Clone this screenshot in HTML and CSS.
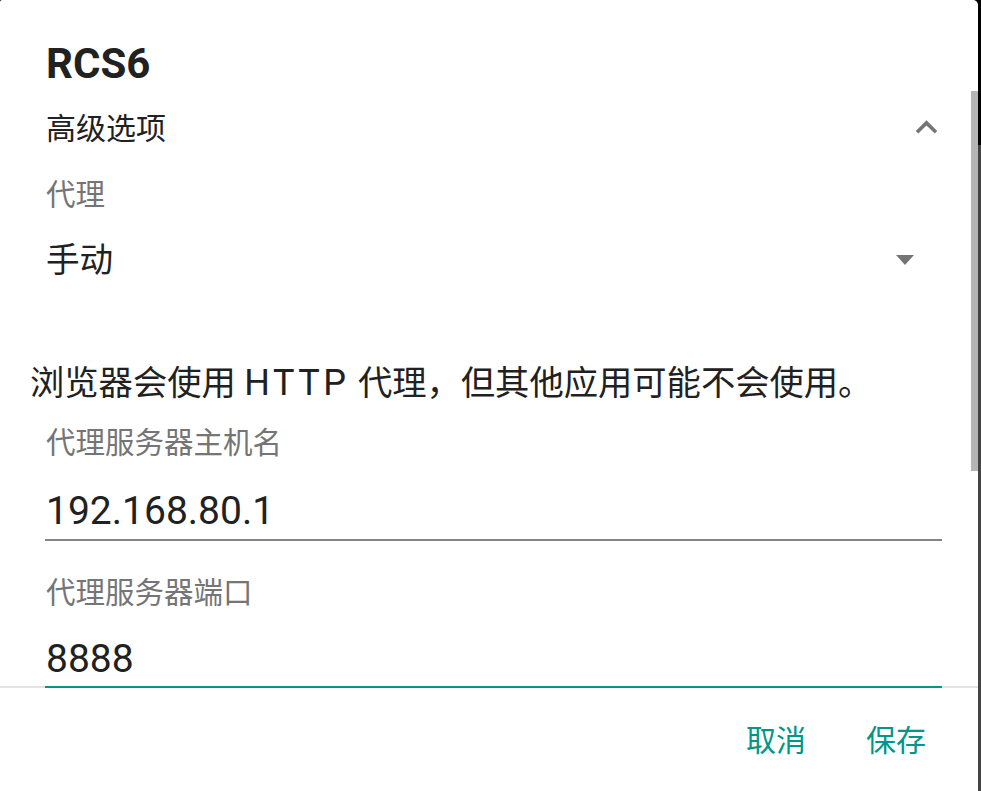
FILE: index.html
```html
<!DOCTYPE html>
<html lang="zh-CN">
<head>
<meta charset="utf-8">
<link rel="stylesheet" href="styles.css">
</head>
<body>
<div class="dialog">
  <div class="title">RCS6</div>
  <div class="scroll">
    <div class="row-adv">
      <span class="adv-text">高级选项</span>
      <svg class="chev" viewBox="0 0 24 24" width="43" height="43"><path d="M12 8l-6 6 1.41 1.41L12 10.83l4.59 4.58L18 14z" fill="#757575"/></svg>
    </div>
    <div class="label label-proxy">代理</div>
    <div class="spinner">
      <span class="spinner-text">手动</span>
      <span class="tri"></span>
    </div>
    <div class="note">浏览器会使用 <span class="latin">HTTP</span> 代理，但其他应用可能不会使用。</div>
    <div class="label label-host">代理服务器主机名</div>
    <div class="input input-host">192.168.80.1</div>
    <div class="label label-port">代理服务器端口</div>
    <div class="input input-port">8888</div>
  </div>
  <div class="footer">
    <span class="btn">取消</span>
    <span class="btn">保存</span>
  </div>
  <div class="scrollbar"></div>
</div>
</body>
</html>
```
FILE: styles.css
```css
html, body {
  margin: 0;
  padding: 0;
  height: 100%;
}
body {
  background: linear-gradient(#000 0, #000 145px, #444 145px);
  font-family: Roboto, "Noto Sans CJK SC", sans-serif;
  color: #212121;
  overflow: hidden;
}
.dialog {
  position: relative;
  width: 978px;
  height: 100%;
  background: #fff;
  border-top-left-radius: 2px;
  border-top-right-radius: 5px;
}
.title {
  padding: 39px 0 0 46px;
  height: 50px;
  line-height: 50px;
  font-size: 42px;
  font-weight: 700;
}
.scroll {
  position: relative;
  z-index: 1;
}
.row-adv {
  height: 80px;
  display: flex;
  align-items: center;
  justify-content: space-between;
  padding: 0 30px 0 46px;
}
.adv-text {
  font-size: 30px;
  line-height: 50px;
}
.chev {
  display: block;
  margin-top: -3px;
}
.label {
  color: #757575;
  font-size: 29.5px;
  line-height: 50px;
  padding-left: 46px;
}
.label-proxy {
  height: 52px;
  line-height: 52px;
}
.spinner {
  height: 80px;
  display: flex;
  align-items: center;
  justify-content: space-between;
  padding: 0 64px 0 46px;
}
.spinner-text {
  font-size: 33.6px;
  line-height: 50px;
}
.tri {
  width: 0;
  height: 0;
  border-left: 9px solid transparent;
  border-right: 9px solid transparent;
  border-top: 10px solid #757575;
  margin-top: -2px;
}
.note {
  margin-top: 57px;
  padding-left: 30px;
  height: 50px;
  font-size: 34.3px;
  line-height: 50px;
  white-space: nowrap;
}
.latin {
  font-size: 36px;
  line-height: 1;
  letter-spacing: 3.5px;
}
.label-host {
  height: 70px;
  line-height: 70px;
}
.input {
  margin: 0 36px 0 45px;
  padding-left: 1px;
  font-size: 39px;
  line-height: 50px;
}
.input-host {
  padding-top: 8px;
  padding-bottom: 3px;
  border-bottom: 2px solid #858585;
}
.label-port {
  margin-top: 27px;
}
.input-port {
  padding-top: 16px;
  padding-bottom: 2px;
  border-bottom: 2px solid #009688;
  margin-bottom: -2px;
}
.footer {
  border-top: 2px solid #e3e3e3;
  display: flex;
  justify-content: flex-end;
  gap: 60px;
  padding: 28px 52px 0 0;
}
.btn {
  color: #009688;
  font-size: 30px;
  line-height: 50px;
}
.scrollbar {
  position: absolute;
  z-index: 2;
  right: 0;
  top: 91px;
  width: 7px;
  height: 380px;
  background: #b5b5b5;
}
```
